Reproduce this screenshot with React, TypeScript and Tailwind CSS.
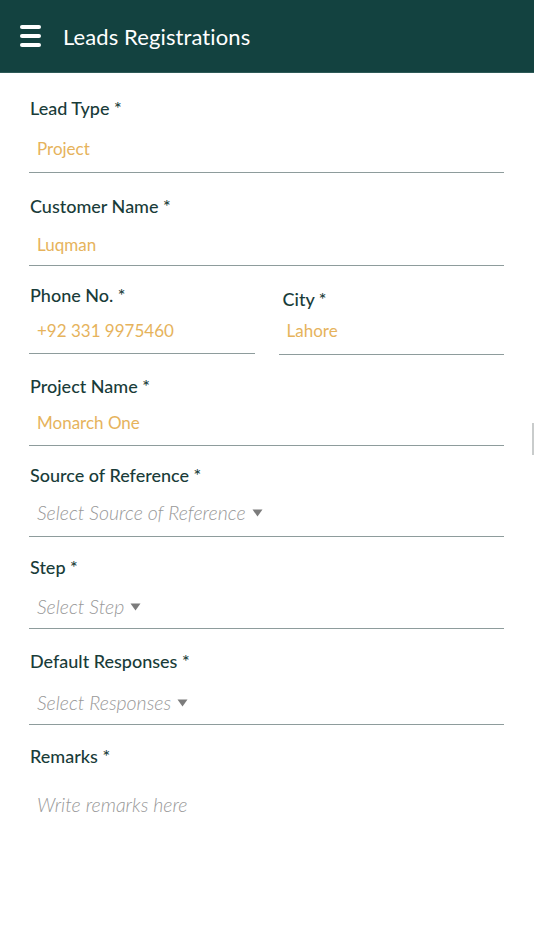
import React from "react";

type FieldProps = {
  label: string;
  value?: string;
  placeholder?: string;
  select?: boolean;
  wrap: string;
  gap: string;
  pad: string;
  labelPad?: string;
  line?: boolean;
};

function Caret() {
  return (
    <svg width="11" height="8" viewBox="0 0 11 8" className="ml-[6px] inline-block">
      <path d="M0.5 0.5 L10.5 0.5 L5.5 7.5 Z" fill="#7c7c7c" />
    </svg>
  );
}

function Field({ label, value, placeholder, select, wrap, gap, pad, labelPad, line = true }: FieldProps) {
  return (
    <div className={wrap}>
      <div className={`h-6 leading-6 pl-[1px] text-[18px] font-medium text-[#193c39] ${labelPad ?? ""}`}>
        {label}
      </div>
      <div className={`${gap} ${pad} ${line ? "border-b border-[#8e9c9c]" : ""}`}>
        <div className="h-7 leading-7 pl-[8px] flex items-center">
          {value ? (
            <span className="text-[17px] text-[#e6b35c]">{value}</span>
          ) : (
            <span className="text-[19.5px] italic font-light text-[#999999] flex items-center">
              {placeholder}
              {select && <Caret />}
            </span>
          )}
        </div>
      </div>
    </div>
  );
}

export default function App() {
  return (
    <div className="relative min-h-[950px] bg-white font-['Lato',_'Noto_Sans',_sans-serif]">
      <header className="h-[73px] bg-[#134240] border-b border-[#2d5a57] flex items-center px-[20px]">
        <div className="flex flex-col gap-[5px] w-[21px]">
          <span className="block h-[4px] rounded-full bg-white" />
          <span className="block h-[4px] rounded-full bg-white" />
          <span className="block h-[4px] rounded-full bg-white" />
        </div>
        <h1 className="ml-[22px] text-[22px] font-normal text-white tracking-[0.1px]">Leads Registrations</h1>
      </header>

      <main className="pl-[29px] pr-[30px]">
        <Field label="Lead Type *" value="Project" wrap="mt-[23px]" gap="mt-[15px]" pad="pb-[9px]" />
        <Field label="Customer Name *" value="Luqman" wrap="mt-[21px]" gap="mt-[13px]" pad="pb-[6px]" />
        <div className="grid grid-cols-2 gap-6">
          <Field label="Phone No. *" value="+92 331 9975460" wrap="mt-[17px]" gap="mt-[10px]" pad="pb-[8px]" />
          <Field
            label="City *"
            value="Lahore"
            wrap="mt-[17px]"
            gap="mt-[6px]"
            pad="pb-[9px]"
            labelPad="pt-[4px] h-[28px] pl-[4px]"
          />
        </div>
        <Field label="Project Name *" value="Monarch One" wrap="mt-[19px]" gap="mt-[11px]" pad="pb-[8px]" />
        <Field
          label="Source of Reference *"
          placeholder="Select Source of Reference"
          select
          wrap="mt-[17px]"
          gap="mt-[12px]"
          pad="pb-[9px]"
        />
        <Field label="Step *" placeholder="Select Step" select wrap="mt-[18px]" gap="mt-[14px]" pad="pb-[7px]" />
        <Field
          label="Default Responses *"
          placeholder="Select Responses"
          select
          wrap="mt-[20px]"
          gap="mt-[16px]"
          pad="pb-[7px]"
        />
        <Field
          label="Remarks *"
          placeholder="Write remarks here"
          wrap="mt-[19px]"
          gap="mt-[23px]"
          pad="pb-0"
          line={false}
        />
      </main>

      <div className="absolute right-0 top-[423px] h-[32px] w-[2px] bg-[#c9cccc]" />
    </div>
  );
}
